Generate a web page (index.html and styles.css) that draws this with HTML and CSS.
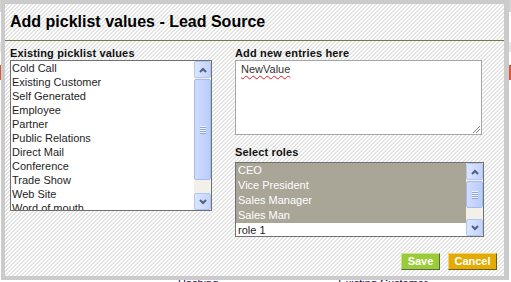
FILE: index.html
```html
<!DOCTYPE html>
<html lang="en">
<head>
    <meta charset="UTF-8">
    <meta name="viewport" content="width=device-width, initial-scale=1.0">
    <title>Add picklist values</title>
    <link rel="stylesheet" href="styles.css">
</head>
<body>
    <!-- page behind the popup, only its edges show -->
    <div class="page">
        <div class="page-top"></div>
        <div class="page-line"></div>
        <div class="page-tab"></div>
        <div class="page-row">
            <span class="cell cell-a">Hashing</span>
            <span class="cell cell-b">Existing Customer</span>
        </div>
    </div>

    <div class="dialog">
        <h2 class="dialog-title">Add picklist values - Lead Source</h2>
        <div class="dialog-body">
            <div class="col-left">
                <div class="field-label">Existing picklist values</div>
                <div class="listbox listbox-existing">
                    <ul class="list-items">
                        <li>Cold Call</li>
                        <li>Existing Customer</li>
                        <li>Self Generated</li>
                        <li>Employee</li>
                        <li>Partner</li>
                        <li>Public Relations</li>
                        <li>Direct Mail</li>
                        <li>Conference</li>
                        <li>Trade Show</li>
                        <li>Web Site</li>
                        <li>Word of mouth</li>
                    </ul>
                    <div class="scrollbar">
                        <div class="sb-btn">
                            <svg width="8" height="6" viewBox="0 0 8 6"><polyline points="1,5 4,2 7,5" fill="none" stroke="#4d6185" stroke-width="2"/></svg>
                        </div>
                        <div class="sb-thumb thumb-existing"><span class="grip"></span></div>
                        <div class="sb-track"></div>
                        <div class="sb-btn">
                            <svg width="8" height="6" viewBox="0 0 8 6"><polyline points="1,1 4,4 7,1" fill="none" stroke="#4d6185" stroke-width="2"/></svg>
                        </div>
                    </div>
                </div>
            </div>

            <div class="col-right">
                <div class="field-label">Add new entries here</div>
                <div class="textbox">
                    <span class="typed">NewValue</span>
                    <svg class="resize-grip" width="8" height="8" viewBox="0 0 8 8">
                        <line x1="8" y1="1" x2="1" y2="8" stroke="#8a8a8a"/>
                        <line x1="8" y1="4" x2="4" y2="8" stroke="#8a8a8a"/>
                    </svg>
                </div>

                <div class="field-label roles-label">Select roles</div>
                <div class="listbox listbox-roles">
                    <ul class="list-items role-items">
                        <li class="selected">CEO</li>
                        <li class="selected">Vice President</li>
                        <li class="selected">Sales Manager</li>
                        <li class="selected">Sales Man</li>
                        <li>role 1</li>
                    </ul>
                    <div class="scrollbar">
                        <div class="sb-btn">
                            <svg width="8" height="6" viewBox="0 0 8 6"><polyline points="1,5 4,2 7,5" fill="none" stroke="#4d6185" stroke-width="2"/></svg>
                        </div>
                        <div class="sb-thumb thumb-roles"><span class="grip"></span></div>
                        <div class="sb-track"></div>
                        <div class="sb-btn">
                            <svg width="8" height="6" viewBox="0 0 8 6"><polyline points="1,1 4,4 7,1" fill="none" stroke="#4d6185" stroke-width="2"/></svg>
                        </div>
                    </div>
                </div>

                <div class="actions">
                    <button type="button" class="btn btn-save">Save</button>
                    <button type="button" class="btn btn-cancel">Cancel</button>
                </div>
            </div>
        </div>
    </div>
</body>
</html>
```

FILE: styles.css
```css
body {
    margin: 0;
    font-family: "Liberation Sans", Arial, sans-serif;
    background: #fff;
    overflow: hidden;
}

/* background page */
.page-top {
    height: 12px;
    background: #d2d2d2;
}
.page-line {
    margin-top: 30px;
    height: 10px;
    background: #e6e6e6;
}
.page-tab {
    margin-top: 13px;
    height: 15px;
    background: #dd5636;
}
.page-row {
    margin-top: 197px;
    display: flex;
    font-size: 11px;
    line-height: 13px;
    color: #2a0a4a;
}
.cell-a {
    margin-left: 178px;
}
.cell-b {
    margin-left: 120px;
}

/* popup */
.dialog {
    position: absolute;
    left: 1px;
    top: 0;
    width: 508px;
    height: 280px;
    box-sizing: border-box;
    border: 4px solid #cbcbcb;
    border-right-width: 5px;
    background: repeating-linear-gradient(-45deg, #fff 0 1.6px, #e4e4e4 1.6px 2.83px);
}
.dialog-title {
    margin: 0;
    padding: 8px 0 8px 5px;
    font-size: 16px;
    line-height: 20px;
    font-weight: bold;
    color: #000;
    border-bottom: 1px solid #6f7a45;
}
.dialog-body {
    display: flex;
    padding: 6px 0 0 5px;
}
.col-left {
    width: 202px;
}
.col-right {
    width: 262px;
    margin-left: 23px;
}
.field-label {
    font-size: 11px;
    line-height: 13px;
    font-weight: bold;
    color: #111;
    letter-spacing: 0.15px;
}

/* list boxes */
.listbox {
    display: flex;
    box-sizing: border-box;
    border: 1px solid #707070;
    background: #fff;
    overflow: hidden;
}
.listbox-existing {
    width: 202px;
    height: 151px;
}
.listbox-roles {
    width: 249px;
    height: 75px;
}
.list-items {
    flex: 1;
    margin: 0;
    padding: 0 0 0 1px;
    list-style: none;
    font-size: 11px;
    line-height: 14px;
    color: #1e1e1e;
    overflow: hidden;
}
.role-items {
    padding: 0;
    line-height: 15px;
}
.role-items li {
    padding-left: 2px;
}
.role-items .selected {
    background: #a9a597;
    color: #fff;
}

/* xp style scrollbar */
.scrollbar {
    width: 17px;
    display: flex;
    flex-direction: column;
    background: #f2f0e8;
}
.sb-btn {
    height: 17px;
    box-sizing: border-box;
    display: flex;
    align-items: center;
    justify-content: center;
    border: 1px solid #b3c6f2;
    border-radius: 2px;
    background: linear-gradient(90deg, #dbe5fe, #c1d3fc);
}
.sb-thumb {
    margin-top: 1px;
    box-sizing: border-box;
    display: flex;
    align-items: center;
    justify-content: center;
    border: 1px solid #a6bbec;
    border-radius: 2px;
    background: linear-gradient(90deg, #cfdcfd, #b9cdfb);
}
.thumb-existing {
    height: 101px;
}
.thumb-roles {
    height: 27px;
}
.sb-track {
    flex: 1;
}
.grip {
    width: 6px;
    height: 8px;
    background: repeating-linear-gradient(#eef3ff 0 1px, #8ca6e2 1px 2px);
}

/* text area */
.textbox {
    width: 247px;
    height: 75px;
    box-sizing: border-box;
    display: flex;
    flex-direction: column;
    padding: 2px 1px 1px 5px;
    border: 1px solid #a6a6a6;
    background: #fff;
}
.typed {
    font-size: 11px;
    line-height: 13px;
    color: #333;
    text-decoration: underline wavy #e02020;
    text-decoration-thickness: 1px;
    text-underline-offset: 2px;
    text-decoration-skip-ink: none;
}
.resize-grip {
    margin-top: auto;
    align-self: flex-end;
}
.roles-label {
    margin: 11px 0 3px;
}

/* buttons */
.actions {
    display: flex;
    justify-content: flex-end;
    gap: 8px;
    margin-top: 16px;
}
.btn {
    height: 17px;
    padding: 0;
    box-sizing: border-box;
    border: 1px solid;
    font-family: "Liberation Sans", Arial, sans-serif;
    font-size: 11px;
    font-weight: bold;
    line-height: 15px;
    color: #fff;
    cursor: pointer;
}
.btn-save {
    width: 39px;
    background: #9bcb36;
    border-color: #c6e48a #5c6a44 #5c6a44 #c6e48a;
}
.btn-cancel {
    width: 49px;
    background: #e3ab03;
    border-color: #f3d36a #6e5a22 #6e5a22 #f3d36a;
}
```
